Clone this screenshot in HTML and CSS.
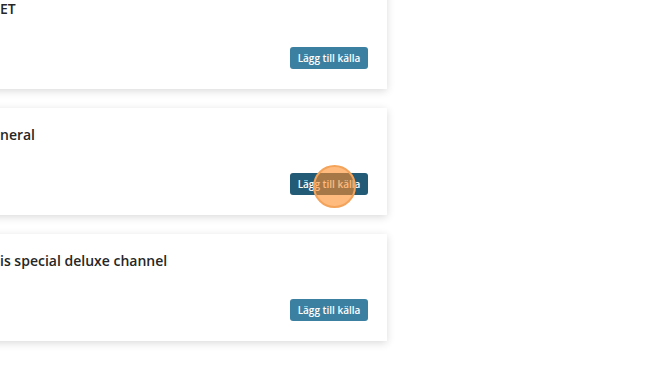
FILE: index.html
```html
<!DOCTYPE html>
<html lang="sv">
<head>
<meta charset="utf-8">
<title>Källor</title>
<link rel="stylesheet" href="styles.css">
</head>
<body>
<div class="list">
  <div class="card">
    <div class="title">ET</div>
    <button class="btn">Lägg till källa</button>
  </div>
  <div class="card">
    <div class="title">neral</div>
    <button class="btn btn-hover">Lägg till källa</button>
  </div>
  <div class="card">
    <div class="title">is special deluxe channel</div>
    <button class="btn">Lägg till källa</button>
  </div>
</div>
<div class="click-marker"></div>
</body>
</html>
```
FILE: styles.css
```css
html, body {
  margin: 0;
  padding: 0;
  background: #ffffff;
  width: 670px;
  height: 373px;
  overflow: hidden;
  font-family: "Open Sans", "Noto Sans", sans-serif;
}
.list {
  display: flex;
  flex-direction: column;
  gap: 19px;
  width: 407px;
  margin-left: -20px;
  margin-top: -18px;
}
.card {
  background: #ffffff;
  height: 107px;
  box-sizing: border-box;
  padding: 17px 19px 20px 20px;
  display: flex;
  flex-direction: column;
  justify-content: space-between;
  box-shadow: 0 2px 8px rgba(0, 0, 0, 0.15);
}
.title {
  font-size: 14px;
  font-weight: 600;
  line-height: 20px;
  color: #262626;
}
.btn {
  align-self: flex-end;
  border: none;
  border-radius: 3px;
  background: #3c80a1;
  color: #ffffff;
  font-family: "Open Sans", "Noto Sans", sans-serif;
  font-size: 10px;
  font-weight: 600;
  height: 22px;
  width: 78px;
  padding: 0;
  line-height: 22px;
}
.btn-hover {
  background: #235a75;
}
.click-marker {
  position: absolute;
  left: 313px;
  top: 165px;
  width: 39px;
  height: 39px;
  border-radius: 50%;
  background: rgba(255, 140, 40, 0.6);
  border: 2px solid #f4a35a;
}
```
